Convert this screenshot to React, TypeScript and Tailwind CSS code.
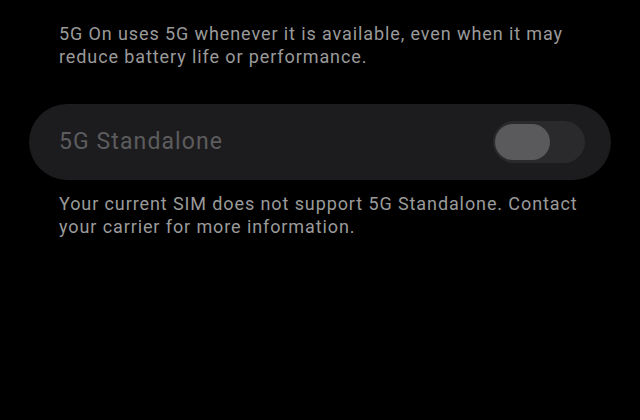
export default function App() {
  return (
    <div
      className="h-[420px] w-[640px] overflow-hidden bg-black"
      style={{ fontFamily: "Roboto, 'Noto Sans', sans-serif" }}
    >
      <div className="px-[29px] pt-[22px]">
        <p className="pl-[30px] pr-[18px] text-[18px] leading-[23px] tracking-[0.9px] text-[#9a9a9a]">
          5G On uses 5G whenever it is available, even when it may reduce battery life or performance.
        </p>

        <div className="mt-[36px] flex h-[76px] items-center justify-between rounded-full bg-[#1c1c1e] pl-[30px] pr-[26px]">
          <span className="text-[23px] tracking-[1.1px] text-[#5c5c5e]">5G Standalone</span>
          {/* disabled switch */}
          <div className="flex h-[42px] w-[92px] items-center rounded-full bg-[#2a2a2c] px-[2px]">
            <div className="h-[36px] w-[55px] rounded-full bg-[#5a5a5c]" />
          </div>
        </div>

        <p className="mt-[12px] pl-[30px] pr-[18px] text-[18px] leading-[23px] tracking-[0.9px] text-[#9a9a9a]">
          Your current SIM does not support 5G Standalone. Contact your carrier for more information.
        </p>
      </div>
    </div>
  );
}
